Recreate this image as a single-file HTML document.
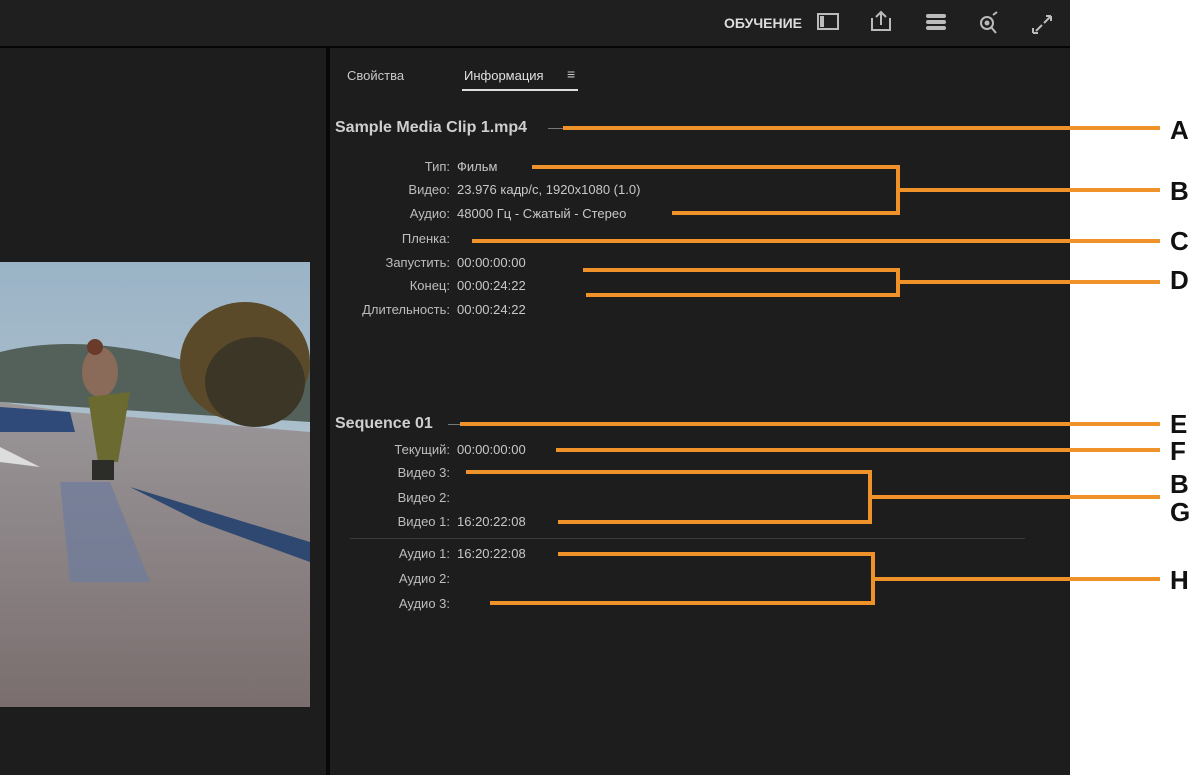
<!DOCTYPE html>
<html><head><meta charset="utf-8"><style>
body{margin:0;width:1200px;height:775px;background:#fff;position:relative;overflow:hidden;font-family:"Liberation Sans",sans-serif}
.app{position:absolute;left:0;top:0;width:1070px;height:775px;background:#1d1d1d}
.top{position:absolute;left:0;top:0;width:1070px;height:46px;background:#1f1f1f;border-bottom:2px solid #050505}
.t{position:absolute;color:#c8c8c8;font-size:13px;white-space:nowrap}
.lab{position:absolute;width:150px;left:300px;text-align:right;color:#bdbdbd;font-size:13px}
.val{position:absolute;left:457px;color:#c8c8c8;font-size:13px;white-space:nowrap}
.o{position:absolute;background:#f0922a}
.L{position:absolute;font-weight:bold;font-size:26px;color:#111;left:1170px}
</style></head><body>
<div class="app">
<div class="top"></div>
<div class="t" style="left:724px;top:15px;font-size:14px;font-weight:bold;color:#ddd">ОБУЧЕНИЕ</div>
<svg style="position:absolute;left:815px;top:10px" width="240" height="30" fill="none" stroke="#bbb" stroke-width="2">
<rect x="3" y="4" width="20" height="15"/><rect x="5" y="6" width="4" height="11" fill="#bbb" stroke="none"/>
<path d="M57 8v12h18V8M66 3v12M61 7l5-5 5 5"/>
<rect x="111" y="4" width="20" height="4" rx="2" fill="#bbb" stroke="none"/><rect x="111" y="10" width="20" height="4" rx="2" fill="#bbb" stroke="none"/><rect x="111" y="16" width="20" height="4" rx="2" fill="#bbb" stroke="none"/>
<circle cx="172" cy="13" r="6"/><circle cx="172" cy="13" r="1.5" fill="#bbb"/><path d="M176 17l5 6M178 5l4-3"/>
<path d="M221 21l6-6M218 23v-5M218 23h5M229 13l7-7M236 6v5M236 6h-5"/>
</svg>
<div style="position:absolute;left:326px;top:48px;width:4px;height:727px;background:#080808"></div>
<div class="t" style="left:347px;top:68px">Свойства</div>
<div class="t" style="left:464px;top:68px;color:#e0e0e0">Информация</div>
<div class="t" style="left:567px;top:66px;font-size:14px">≡</div>
<div style="position:absolute;left:462px;top:89px;width:116px;height:2px;background:#ddd"></div>
<div class="t" style="left:335px;top:119px;font-size:16px;font-weight:bold;color:#cfcfcf">Sample Media Clip 1.mp4</div>
<div class="lab" style="top:159px">Тип:</div><div class="val" style="top:159px">Фильм</div>
<div class="lab" style="top:182px">Видео:</div><div class="val" style="top:182px">23.976 кадр/с, 1920x1080 (1.0)</div>
<div class="lab" style="top:206px">Аудио:</div><div class="val" style="top:206px">48000 Гц - Сжатый - Стерео</div>
<div class="lab" style="top:231px">Пленка:</div>
<div class="lab" style="top:255px">Запустить:</div><div class="val" style="top:255px">00:00:00:00</div>
<div class="lab" style="top:278px">Конец:</div><div class="val" style="top:278px">00:00:24:22</div>
<div class="lab" style="top:302px">Длительность:</div><div class="val" style="top:302px">00:00:24:22</div>
<div class="t" style="left:335px;top:415px;font-size:16px;font-weight:bold;color:#cfcfcf">Sequence 01</div>
<div class="lab" style="top:442px">Текущий:</div><div class="val" style="top:442px">00:00:00:00</div>
<div class="lab" style="top:465px">Видео 3:</div>
<div class="lab" style="top:490px">Видео 2:</div>
<div class="lab" style="top:514px">Видео 1:</div><div class="val" style="top:514px">16:20:22:08</div>
<div style="position:absolute;left:350px;top:538px;width:675px;height:1px;background:#3a3a3a"></div>
<div class="lab" style="top:546px">Аудио 1:</div><div class="val" style="top:546px">16:20:22:08</div>
<div class="lab" style="top:571px">Аудио 2:</div>
<div class="lab" style="top:596px">Аудио 3:</div>
<div style="position:absolute;left:548px;top:128px;width:15px;height:1px;background:#777"></div>
<div style="position:absolute;left:448px;top:424px;width:12px;height:1px;background:#777"></div>
<svg style="position:absolute;left:0;top:262px" width="310" height="445" viewBox="0 0 310 445">
<defs><linearGradient id="sky" x1="0" y1="0" x2="0" y2="1"><stop offset="0" stop-color="#9ab3c6"/><stop offset="1" stop-color="#c8d2d6"/></linearGradient>
<linearGradient id="gr" x1="0" y1="0" x2="0" y2="1"><stop offset="0" stop-color="#9a9699"/><stop offset="1" stop-color="#7a6e6e"/></linearGradient></defs>
<rect width="310" height="445" fill="url(#sky)"/>
<path d="M0 90 Q80 70 190 100 L310 100 L310 160 L0 140Z" fill="#54605a"/>
<ellipse cx="245" cy="100" rx="65" ry="60" fill="#5a4a2a"/>
<ellipse cx="255" cy="120" rx="50" ry="45" fill="#3c3626"/>
<path d="M0 140 L70 150 L310 170 L310 445 L0 445Z" fill="url(#gr)"/>
<path d="M0 145 L70 150 L75 170 L0 170Z" fill="#2f4a78"/>
<path d="M60 220 L110 220 L150 320 L70 320Z" fill="#6d7c9e" opacity=".7"/>
<path d="M130 225 L310 280 L310 300 L200 260Z" fill="#2e4872"/>
<path d="M0 185 L40 205 L0 200Z" fill="#ddd"/>
<ellipse cx="100" cy="110" rx="18" ry="25" fill="#8a6a58"/>
<circle cx="95" cy="85" r="8" fill="#6a3a2a"/>
<path d="M88 135 L130 130 L118 200 L98 200Z" fill="#6b6a30"/>
<rect x="92" y="198" width="22" height="20" fill="#2c2c28"/>
</svg>
</div>
<div class="o" style="left:563px;top:126px;width:597px;height:4px"></div>
<div class="o" style="left:532px;top:165px;width:368px;height:4px"></div>
<div class="o" style="left:672px;top:211px;width:228px;height:4px"></div>
<div class="o" style="left:896px;top:165px;width:4px;height:50px"></div>
<div class="o" style="left:896px;top:188px;width:264px;height:4px"></div>
<div class="o" style="left:472px;top:239px;width:688px;height:4px"></div>
<div class="o" style="left:583px;top:268px;width:317px;height:4px"></div>
<div class="o" style="left:586px;top:293px;width:314px;height:4px"></div>
<div class="o" style="left:896px;top:268px;width:4px;height:29px"></div>
<div class="o" style="left:896px;top:280px;width:264px;height:4px"></div>
<div class="o" style="left:460px;top:422px;width:700px;height:4px"></div>
<div class="o" style="left:556px;top:448px;width:604px;height:4px"></div>
<div class="o" style="left:466px;top:470px;width:406px;height:4px"></div>
<div class="o" style="left:558px;top:520px;width:314px;height:4px"></div>
<div class="o" style="left:868px;top:470px;width:4px;height:54px"></div>
<div class="o" style="left:868px;top:495px;width:292px;height:4px"></div>
<div class="o" style="left:558px;top:552px;width:317px;height:4px"></div>
<div class="o" style="left:490px;top:601px;width:385px;height:4px"></div>
<div class="o" style="left:871px;top:552px;width:4px;height:53px"></div>
<div class="o" style="left:871px;top:577px;width:289px;height:4px"></div>
<div class="L" style="top:115px">A</div>
<div class="L" style="top:176px">B</div>
<div class="L" style="top:226px">C</div>
<div class="L" style="top:265px">D</div>
<div class="L" style="top:409px">E</div>
<div class="L" style="top:436px">F</div>
<div class="L" style="top:469px">B</div>
<div class="L" style="top:497px">G</div>
<div class="L" style="top:565px">H</div>
</body></html>
